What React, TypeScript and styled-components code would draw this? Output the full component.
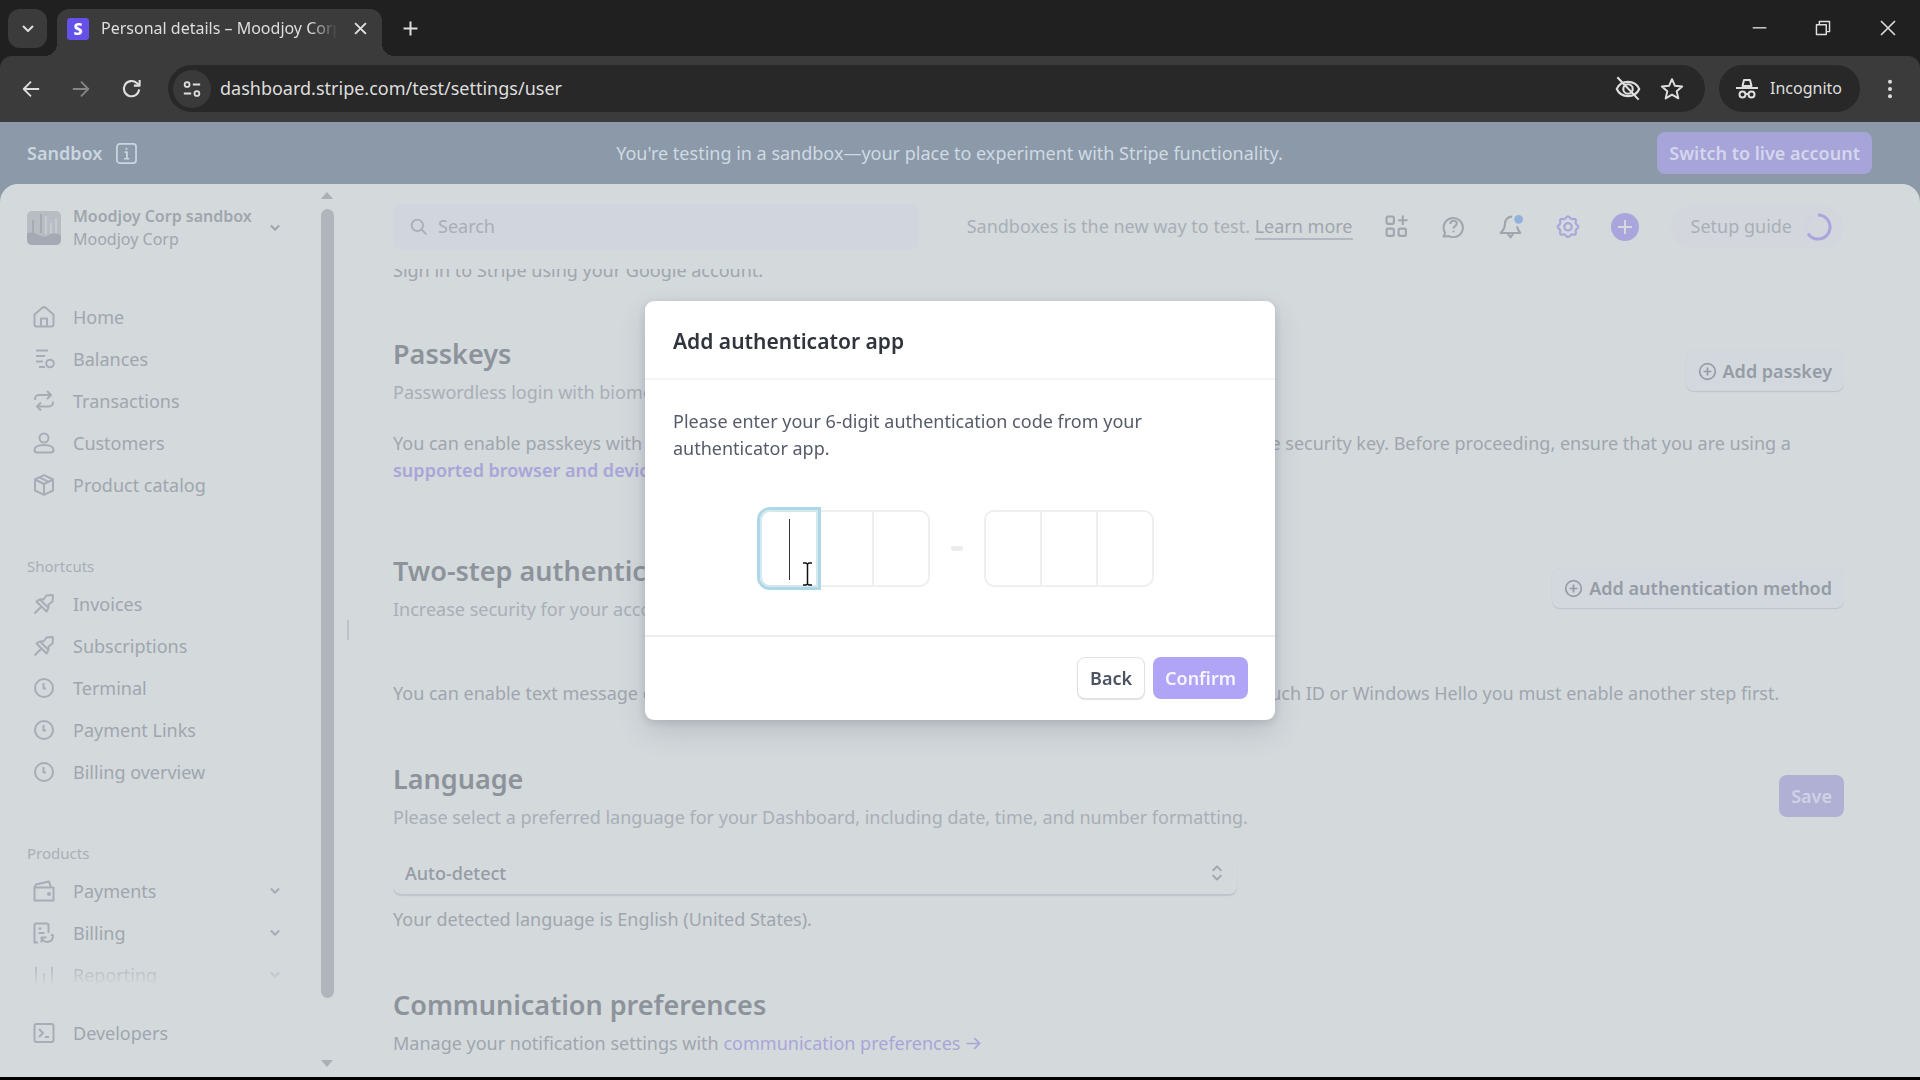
import React from "react";
import styled, { createGlobalStyle, css } from "styled-components";

const color = {
  strip: "#202020",
  toolbar: "#3b3b3b",
  field: "#282828",
  chromeText: "#dedede",
  banner: "#8b99a9",
  page: "#d4d9dc",
  text: "#9fa6ae",
  soft: "#a8afb7",
  icon: "#a6adb7",
  heading: "#8c939b",
  strong: "#959ca5",
  link: "#a9a5d8",
  accent: "#aaa5dc",
};

const Global = createGlobalStyle`
  *, *::before, *::after { box-sizing: border-box; }
  html, body, #root { height: 100%; }
  body {
    margin: 0;
    background: #000;
    font-family: "Noto Sans", "Open Sans", sans-serif;
    font-size: 18px;
    line-height: 27px;
    color: ${color.text};
    overflow: hidden;
  }
  button, input, select { font: inherit; color: inherit; margin: 0; }
  button { padding: 0; border: 0; background: none; }
  a { color: inherit; text-decoration: none; }
  h1, h2, p, ul { margin: 0; padding: 0; }
  ul { list-style: none; }
`;

const Screen = styled.div`
  display: flex;
  flex-direction: column;
  height: 100vh;
  padding-bottom: 3px;
`;

/* ---------- Browser window ---------- */

const TabStrip = styled.div`
  display: flex;
  flex: none;
  height: 56px;
  padding: 9px 0 0 8px;
  background: ${color.strip};
  color: ${color.chromeText};
`;

const TabSearch = styled.button`
  display: grid;
  place-items: center;
  width: 39px;
  height: 39px;
  margin-right: 10px;
  border-radius: 12px;
  background: ${color.toolbar};
`;

const Tab = styled.div`
  position: relative;
  display: flex;
  align-items: center;
  width: 325px;
  height: 47px;
  padding: 0 10px 8px 10px;
  border-radius: 12px 12px 0 0;
  background: ${color.toolbar};
  font-size: 16px;

  &::before, &::after {
    content: "";
    position: absolute;
    bottom: 0;
    width: 12px;
    height: 12px;
  }
  &::before {
    left: -12px;
    background: radial-gradient(circle at 0 0, transparent 12px, ${color.toolbar} 12px);
  }
  &::after {
    right: -12px;
    background: radial-gradient(circle at 100% 0, transparent 12px, ${color.toolbar} 12px);
  }
`;

const Favicon = styled.span`
  display: grid;
  place-items: center;
  width: 22px;
  height: 22px;
  margin-right: 12px;
  border-radius: 3px;
  background: #6351ea;
  color: #fff;
  font-weight: 800;
  font-size: 16px;
  line-height: 22px;
`;

const TabTitle = styled.span`
  flex: 1;
  margin-right: 10px;
  overflow: hidden;
  white-space: nowrap;
  mask-image: linear-gradient(90deg, #000 88%, transparent);
`;

const ChromeButton = styled.button<{ $width?: number; $dim?: boolean }>`
  display: grid;
  place-items: center;
  flex: none;
  width: ${(p) => p.$width ?? 40}px;
  height: 38px;
  color: ${(p) => (p.$dim ? "#858585" : color.chromeText)};
`;

const WindowControls = styled.div`
  display: flex;
  margin-left: auto;
`;

const Toolbar = styled.div`
  flex: none;
  background: ${color.strip};
`;

const ToolbarInner = styled.div`
  display: flex;
  align-items: center;
  height: 66px;
  padding: 0 10px 1px 6px;
  border-radius: 12px 12px 0 0;
  background: ${color.toolbar};
  color: ${color.chromeText};
`;

const Omnibox = styled.div`
  display: flex;
  flex: 1;
  align-items: center;
  height: 47px;
  margin-left: 12px;
  padding: 0 12px 0 5px;
  border-radius: 24px;
  background: ${color.field};
`;

const SiteInfo = styled.button`
  display: grid;
  place-items: center;
  width: 38px;
  height: 38px;
  margin-right: 9px;
  border-radius: 50%;
  background: #3a3a3a;
`;

const Address = styled.input`
  flex: 1;
  min-width: 0;
  padding: 0;
  border: 0;
  outline: 0;
  background: none;
  font-size: 18px;
`;

const Incognito = styled.div`
  display: flex;
  align-items: center;
  gap: 12px;
  height: 47px;
  margin: 0 10px 0 14px;
  padding: 0 18px 0 17px;
  border-radius: 24px;
  background: ${color.field};
  font-size: 16px;
`;

/* ---------- Sandbox banner ---------- */

const Banner = styled.div`
  display: grid;
  grid-template-columns: 1fr auto 1fr;
  align-items: center;
  flex: none;
  height: 62px;
  padding: 0 48px 0 27px;
  background: ${color.banner};
  color: #cbd6df;
`;

const BannerName = styled.div`
  display: flex;
  align-items: center;
  gap: 14px;
  font-weight: 600;
`;

const BannerText = styled.p`
  color: #d0dae3;
`;

const Button = styled.button<{ $tone: "live" | "save" | "confirm" | "back" | "ghost" }>`
  display: inline-flex;
  align-items: center;
  justify-content: center;
  gap: 6px;
  height: 42px;
  padding: 0 12px;
  border-radius: 8px;
  font-weight: 600;
  white-space: nowrap;
  ${(p) =>
    ({
      live: css`background: #a6a4d9; color: #d5d6ec; justify-self: end;`,
      save: css`background: #afb0d4; color: #cfd2e4;`,
      confirm: css`background: #b0a4f6; color: #f6f4ff;`,
      back: css`
        background: #fff;
        color: #4b5260;
        border: 1px solid #dfe1e5;
        box-shadow: 0 1px 1px rgba(0, 0, 0, 0.12);
      `,
      ghost: css`
        height: 40px;
        background: #d3d8de;
        color: ${color.strong};
        box-shadow: 0 1px 1px #bcc1ca, 0 0 1px #c8cdd4;
      `,
    })[p.$tone]}
`;

/* ---------- Dashboard shell ---------- */

const Shell = styled.div`
  flex: 1;
  min-height: 0;
  background: ${color.banner};
`;

const Page = styled.div`
  display: flex;
  height: 100%;
  border-radius: 18px 18px 0 0;
  background: ${color.page};
  overflow: hidden;
`;

const Sidebar = styled.nav`
  display: flex;
  flex-direction: column;
  flex: none;
  width: 320px;
  padding: 21px 38px 0 27px;
`;

const Account = styled.button`
  display: grid;
  grid-template-columns: 34px 1fr 16px;
  column-gap: 12px;
  align-items: center;
  margin-bottom: 45px;
  text-align: left;
  font-size: 16px;
  line-height: 23px;
`;

const Avatar = styled.svg`
  width: 34px;
  height: 34px;
  border-radius: 5px;
`;

const AccountName = styled.span`
  display: block;
  font-weight: 600;
  white-space: nowrap;
`;

const NavList = styled.ul<{ $gap?: number }>`
  display: flex;
  flex-direction: column;
  margin-bottom: ${(p) => p.$gap ?? 0}px;
`;

const NavLink = styled.a<{ $fading?: boolean }>`
  display: grid;
  grid-template-columns: 34px 1fr 16px;
  column-gap: 12px;
  align-items: center;
  justify-items: start;
  height: 42px;
  svg { color: ${color.icon}; }
  & > svg:first-child { margin-left: 6px; }
  ${(p) =>
    p.$fading &&
    css`
      mask-image: linear-gradient(rgba(0, 0, 0, 0.6) 35%, rgba(0, 0, 0, 0.3) 55%, transparent 76%);
    `}
`;

const NavLabel = styled.h2`
  margin-bottom: 4px;
  font-size: 15px;
  font-weight: 400;
  line-height: 26px;
  color: ${color.soft};
`;

const ScrollBar = styled.div`
  display: flex;
  flex-direction: column;
  align-items: center;
  flex: none;
  width: 14px;
  padding: 8px 0 10px;
`;

const ScrollArrow = styled.span<{ $down?: boolean }>`
  border: 6px solid transparent;
  border-top: ${(p) => (p.$down ? "7px solid #a9b0b6" : "0")};
  border-bottom: ${(p) => (p.$down ? "0" : "7px solid #a9b0b6")};
`;

const ScrollThumb = styled.div`
  flex: 788;
  width: 13px;
  margin: 10px 0 0;
  border-radius: 7px;
  background: #afb5ba;
`;

const ScrollSpace = styled.div`
  flex: 62;
`;

const Resizer = styled.div`
  align-self: center;
  flex: none;
  width: 2px;
  height: 20px;
  margin: 0 44px 2px 13px;
  background: #bcc2c8;
`;

const Main = styled.main`
  display: flex;
  flex-direction: column;
  flex: 1;
  min-width: 0;
  padding-right: 76px;
`;

const Header = styled.header`
  display: flex;
  align-items: center;
  flex: none;
  height: 85px;
`;

const SearchBox = styled.label`
  display: flex;
  align-items: center;
  gap: 10px;
  flex: 0 1 526px;
  height: 46px;
  padding-left: 17px;
  border-radius: 8px;
  background: #d1d5dd;
  color: ${color.soft};
`;

const SearchInput = styled.input`
  flex: 1;
  min-width: 0;
  padding: 0;
  border: 0;
  background: none;
  &::placeholder { color: ${color.soft}; opacity: 1; }
`;

const HeaderNote = styled.p`
  margin-left: auto;
  white-space: nowrap;
  color: ${color.soft};
  a { border-bottom: 2px solid #b2b8c1; color: ${color.text}; }
`;

const HeaderIcons = styled.div`
  display: flex;
  align-items: center;
  gap: 29px;
  margin: 0 32px 0 30px;
`;

const IconButton = styled.button<{ $accent?: boolean }>`
  display: grid;
  place-items: center;
  width: 28px;
  height: 28px;
  color: ${(p) => (p.$accent ? color.accent : color.text)};
`;

const SetupGuide = styled.button`
  display: flex;
  align-items: center;
  gap: 12px;
  height: 44px;
  padding: 0 12px 0 20px;
  border-radius: 22px;
  background: #d3d7dd;
  color: ${color.soft};
`;

const Content = styled.div`
  flex: 1;
  min-height: 0;
  overflow: hidden;
`;

const Clipped = styled.p`
  margin: -12px 0 52px;
`;

const Section = styled.section<{ $gap: number }>`
  margin-bottom: ${(p) => p.$gap}px;
`;

const SectionHead = styled.div<{ $gap: number }>`
  display: flex;
  align-items: center;
  justify-content: space-between;
  margin-bottom: ${(p) => p.$gap}px;
`;

const Heading = styled.h2`
  margin-bottom: 7px;
  font-size: 27px;
  font-weight: 600;
  line-height: 36px;
  color: ${color.heading};
`;

const Muted = styled.p`
  color: ${color.soft};
`;

const Link = styled.a<{ $bold?: boolean }>`
  color: ${color.link};
  font-weight: ${(p) => (p.$bold ? 600 : 400)};
  svg { vertical-align: -2px; }
`;

const SelectWrap = styled.label`
  display: grid;
  align-items: center;
  width: 58.2%;
  height: 42px;
  margin-bottom: 12px;
  border-radius: 8px;
  box-shadow: 0 2px 1px #bec4ca;
  & > * { grid-area: 1 / 1; }
  svg { justify-self: end; margin-right: 12px; }
`;

const Select = styled.select`
  appearance: none;
  width: 100%;
  height: 42px;
  padding: 0 12px;
  border: 0;
  border-radius: 8px;
  background: transparent;
  color: ${color.strong};
  font-weight: 500;
`;

/* ---------- Dialog ---------- */

const Overlay = styled.div`
  position: fixed;
  inset: 0;
  display: grid;
  place-items: center;
  padding-bottom: 59px;
`;

const Dialog = styled.div`
  display: flex;
  flex-direction: column;
  width: 630px;
  border-radius: 9px;
  background: #fff;
  color: #555b68;
  box-shadow: 0 12px 28px rgba(60, 70, 90, 0.16), 0 2px 8px rgba(60, 70, 90, 0.18);
`;

const DialogTitle = styled.h1`
  padding: 26px 28px 22px;
  border-bottom: 2px solid #f3f4f5;
  font-size: 21px;
  font-weight: 600;
  line-height: 29px;
  color: #30343c;
`;

const DialogBody = styled.div`
  padding: 28px 92px 48px 28px;
`;

const CodeRow = styled.div`
  display: flex;
  align-items: center;
  justify-content: center;
  margin: 48px -64px 0 0;
  padding-right: 6px;
`;

const CodeGroup = styled.div`
  display: flex;
`;

const CodeCell = styled.div<{ $active?: boolean }>`
  position: relative;
  width: 58px;
  height: 77px;
  border: 2px solid #efeff1;
  margin-right: -2px;
  &:first-child { border-radius: 10px 0 0 10px; }
  &:last-child { border-radius: 0 10px 10px 0; margin-right: 0; }
  ${(p) =>
    p.$active &&
    css`
      z-index: 1;
      border-color: #d4e8f0;
      box-shadow: 0 0 0 3px #aed8e7;
    `}
`;

const CodeInput = styled.input`
  width: 100%;
  height: 100%;
  padding: 0;
  border: 0;
  outline: 0;
  background: none;
  text-align: center;
  font-size: 40px;
`;

const Caret = styled.span`
  position: absolute;
  top: 7px;
  left: 27px;
  width: 1px;
  height: 61px;
  background: #333;
`;

const Pointer = styled.svg`
  position: absolute;
  left: 40px;
  top: 50px;
`;

const Dash = styled.span`
  width: 12px;
  height: 5px;
  margin: 0 21px;
  border-radius: 2px;
  background: #ececef;
`;

const DialogFooter = styled.div`
  display: flex;
  justify-content: flex-end;
  gap: 8px;
  padding: 20px 27px 21px;
  border-top: 2px solid #ededf0;
`;

/* ---------- Icons ---------- */

const shapes: Record<string, React.ReactNode> = {
  home: <><path d="M1.500 8.500 9 2a3 3 0 0 1 4 0l7.500 6.500V18.500a2 2 0 0 1-2 2h-15a2 2 0 0 1-2-2z" /><path d="M8 20.500v-8h6v8" /></>,
  balances: <><path d="M3 2.500h12M3 8h9M3 13.500h7M6 19h6" /><circle cx="17" cy="15.500" r="3.800" /></>,
  transactions: <><path d="M14 1l4 4-4 4" /><path d="M18 5H6a4 4 0 0 0-4 4v1" /><path d="M8 12.500l-4 4 4 4" /><path d="M4 16.500h12a4 4 0 0 0 4-4v-1" /></>,
  customers: <><circle cx="11" cy="6" r="4.500" /><path d="M1.500 18c0-3.500 4-5 9.500-5s9.500 1.500 9.500 5c0 1.500-1 2.500-2.500 2.500H4C2.500 20.500 1.500 19.500 1.500 18z" /></>,
  catalog: <><path d="M11 1.200 20 5.500v11L11 20.800 2 16.500v-11z" /><path d="M2 5.500 11 10l9-4.500M11 10v10.800M6.500 3.300l9 4.500" /></>,
  pin: <><path d="M13.500 2.500 19 2a1 1 0 0 1 1 1l-.5 5.500-4 3c.5 3-.2 5-2 7L3.500 8.500C5.500 6.800 7.500 6 10.500 6.500z" /><path d="M8 14 1.500 20.500M7 6.500l8.500 8.500" /></>,
  clock: <><circle cx="11" cy="11" r="9" /><path d="M10.500 6v5.500H13" /></>,
  payments: <><path d="M1.500 7.500h19v13h-19zM1.500 7.500 3 4.500 16 1.500l2 6" /><circle cx="16" cy="14" r="1" /></>,
  billing: <><path d="M5 20.500H1.500V3A1.500 1.500 0 0 1 3 1.500h11A1.500 1.500 0 0 1 15.500 3v8" /><path d="M5.500 6.500h3M5.500 11h6" /><path d="M8.500 20.500v-5h5M9 16c2 5.500 11 5.500 11-2.500l-2-1" /></>,
  reporting: <path d="M3 3v17M11 9v11M19 3v17" />,
  developers: <><rect x="1.500" y="2" width="19" height="18" rx="2" /><path d="m6 7 4 4-4 4M12 15h4" /></>,
  chevron: <path d="m6 8 5 5 5-5" />,
  search: <><circle cx="9" cy="9" r="7" /><path d="m14 14 6 6" /></>,
  apps: <><rect x="1.500" y="1.500" width="7" height="7" rx="1.500" /><rect x="1.500" y="13" width="7" height="7" rx="1.500" /><rect x="13" y="13" width="7" height="7" rx="1.500" /><path d="M17 .5v9M12.500 5h9" /></>,
  help: <><path d="M1.500 20.500 3 17a9.200 9.200 0 1 1 3.500 3.200z" /><path d="M8 8.500c0-4 6.200-3.800 6.200-.2C14.200 10.500 11 10.500 11 13M11 15v1.500" /></>,
  bell: <><path d="M12 1.500C8 1.500 5.500 4.500 5.500 8c0 4-1.500 6-4 8.500h18c-1.500-1.700-2.500-3.500-3-6" /><path d="M8 17l2.500 3.500L13 17" /><circle cx="18" cy="4" r="4" fill="#92b2dc" stroke="none" /></>,
  gear: <><path d="M11 1.300c1.300 0 2 2 3.200 2.400 1.200.4 2.900-.7 3.700.2.900.9-.2 2.500.2 3.700.4 1.100 2.400 1.900 2.400 3.200s-2 2-2.400 3.200c-.4 1.200.7 2.900-.2 3.700-.9.900-2.500-.2-3.700.2-1.100.4-1.900 2.400-3.200 2.400s-2-2-3.200-2.400c-1.200-.4-2.900.7-3.700-.2-.9-.9.200-2.500-.2-3.700C3.500 12.900 1.500 12.100 1.500 10.800s2-2 2.400-3.200c.4-1.200-.7-2.900.2-3.700.9-.9 2.500.2 3.700-.2C8.900 3.300 9.700 1.300 11 1.300z" /><circle cx="11" cy="10.800" r="3.400" /></>,
  plusCircle: <><circle cx="11" cy="11" r="9" /><path d="M11 6.500v9M6.500 11h9" /></>,
  upDown: <path d="m5 8 6-6 6 6M5 14l6 6 6-6" />,
  arrowRight: <path d="M2 11h17M12 4l7 7-7 7" />,
  info: <><rect x="1" y="1" width="20" height="20" rx="3" /><path d="M9 9.500h2.500V16M8.500 16.500h5.500M11 5v2" /></>,
  back: <path d="M20 11H3M11 3l-8 8 8 8" />,
  forward: <path d="M2 11h17M11 3l8 8-8 8" />,
  reload: <><path d="M19 12a8 8 0 1 1-2.500-6.700L19 7.700" /><path d="M19.500 2v6h-6" /></>,
  close: <path d="m4 4 14 14M18 4 4 18" />,
  plus: <path d="M11 2v18M2 11h18" />,
  minimise: <path d="M1 10h20" />,
  restore: <><path d="M2 6.500h13.500V20H2z" /><path d="M6 6V2h14v14h-4" /></>,
  tune: <><circle cx="5" cy="5.500" r="3" /><path d="M12 5.500h9M1 16.500h9" /><circle cx="17" cy="16.500" r="3" /></>,
  eyeOff: <><path d="M1.500 11C5 3 17 3 20.500 11 17 19 5 19 1.500 11z" /><circle cx="11" cy="11" r="4" /><path d="m2 1 18 19" /></>,
  star: <path d="m11 2 2.700 6.100 6.600.6-5 4.400 1.500 6.500-5.800-3.400-5.800 3.400 1.500-6.500-5-4.400 6.600-.6z" />,
  incognito: <><path d="M6.500 8 8 2h6l1.500 6z" /><path d="M0 10h22" /><circle cx="6.500" cy="16.500" r="3" /><circle cx="15.500" cy="16.500" r="3" /><path d="M9.500 16h3" /></>,
  more: <g fill="currentColor" stroke="none"><circle cx="11" cy="3" r="2.200" /><circle cx="11" cy="11" r="2.200" /><circle cx="11" cy="19" r="2.200" /></g>,
};

const Icon = ({ name, size = 22, weight = 2 }: { name: string; size?: number; weight?: number }) => (
  <svg
    width={size}
    height={size}
    viewBox="0 0 22 22"
    fill="none"
    stroke="currentColor"
    strokeWidth={weight}
    strokeLinejoin="round"
    aria-hidden="true"
  >
    {shapes[name]}
  </svg>
);

type Item = { icon: string; label: string; expandable?: boolean; fading?: boolean };

const mainItems: Item[] = [
  { icon: "home", label: "Home" },
  { icon: "balances", label: "Balances" },
  { icon: "transactions", label: "Transactions" },
  { icon: "customers", label: "Customers" },
  { icon: "catalog", label: "Product catalog" },
];

const shortcuts: Item[] = [
  { icon: "pin", label: "Invoices" },
  { icon: "pin", label: "Subscriptions" },
  { icon: "clock", label: "Terminal" },
  { icon: "clock", label: "Payment Links" },
  { icon: "clock", label: "Billing overview" },
];

const products: Item[] = [
  { icon: "payments", label: "Payments", expandable: true },
  { icon: "billing", label: "Billing", expandable: true },
  { icon: "reporting", label: "Reporting", expandable: true, fading: true },
];

const Nav = ({ items, gap }: { items: Item[]; gap?: number }) => (
  <NavList $gap={gap}>
    {items.map((item) => (
      <li key={item.label}>
        <NavLink href="#" $fading={item.fading}>
          <Icon name={item.icon} />
          <span>{item.label}</span>
          {item.expandable && <Icon name="chevron" size={18} weight={2.6} />}
        </NavLink>
      </li>
    ))}
  </NavList>
);

const BrowserChrome = () => (
  <>
    <TabStrip>
      <TabSearch aria-label="Search tabs"><Icon name="chevron" size={22} /></TabSearch>
      <Tab>
        <Favicon>S</Favicon>
        <TabTitle>Personal details – Moodjoy Corp</TabTitle>
        <ChromeButton $width={24} aria-label="Close tab"><Icon name="close" size={17} weight={2.6} /></ChromeButton>
      </Tab>
      <ChromeButton $width={56} aria-label="New tab"><Icon name="plus" size={17} weight={2.6} /></ChromeButton>
      <WindowControls>
        <ChromeButton $width={64} aria-label="Minimise"><Icon name="minimise" size={15} /></ChromeButton>
        <ChromeButton $width={64} aria-label="Restore"><Icon name="restore" size={16} /></ChromeButton>
        <ChromeButton $width={65} aria-label="Close"><Icon name="close" size={22} weight={1.6} /></ChromeButton>
      </WindowControls>
    </TabStrip>
    <Toolbar>
      <ToolbarInner>
        <ChromeButton $width={50} aria-label="Back"><Icon name="back" size={20} /></ChromeButton>
        <ChromeButton $width={50} $dim aria-label="Forward"><Icon name="forward" size={20} /></ChromeButton>
        <ChromeButton $width={50} aria-label="Reload"><Icon name="reload" size={21} weight={2.2} /></ChromeButton>
        <Omnibox>
          <SiteInfo aria-label="Site information"><Icon name="tune" size={18} weight={2.2} /></SiteInfo>
          <Address aria-label="Address" defaultValue="dashboard.stripe.com/test/settings/user" />
          <ChromeButton $width={46} aria-label="Cookies blocked"><Icon name="eyeOff" size={26} weight={1.8} /></ChromeButton>
          <ChromeButton $width={42} aria-label="Bookmark"><Icon name="star" size={24} weight={1.8} /></ChromeButton>
        </Omnibox>
        <Incognito><Icon name="incognito" />Incognito</Incognito>
        <ChromeButton aria-label="Menu"><Icon name="more" size={20} /></ChromeButton>
      </ToolbarInner>
    </Toolbar>
  </>
);

const SideNav = () => (
  <Sidebar>
    <Account>
      <Avatar viewBox="0 0 34 34" aria-hidden="true">
        <rect width="34" height="34" fill="#b8bdc4" />
        <path d="M0 22c8-3 14 6 20 3s8-3 14-1v10H0z" fill="#a4a9b3" />
        <path d="M14 3v19M6 9v15" stroke="#a6abb3" strokeWidth="2" />
        <path d="M19 5v18M24 12v10M29 8v14" stroke="#c6cbcf" strokeWidth="2" />
      </Avatar>
      <span>
        <AccountName>Moodjoy Corp sandbox</AccountName>
        Moodjoy Corp
      </span>
      <Icon name="chevron" size={18} weight={2.6} />
    </Account>
    <Nav items={mainItems} gap={47} />
    <NavLabel>Shortcuts</NavLabel>
    <Nav items={shortcuts} gap={47} />
    <NavLabel>Products</NavLabel>
    <Nav items={products} gap={16} />
    <Nav items={[{ icon: "developers", label: "Developers" }]} />
  </Sidebar>
);

const TopBar = () => (
  <Header>
    <SearchBox>
      <Icon name="search" size={18} weight={2.2} />
      <SearchInput placeholder="Search" aria-label="Search" />
    </SearchBox>
    <HeaderNote>Sandboxes is the new way to test. <a href="#">Learn more</a></HeaderNote>
    <HeaderIcons>
      <IconButton aria-label="Apps"><Icon name="apps" size={23} /></IconButton>
      <IconButton aria-label="Help"><Icon name="help" size={23} /></IconButton>
      <IconButton aria-label="Notifications"><Icon name="bell" size={24} /></IconButton>
      <IconButton $accent aria-label="Settings"><Icon name="gear" size={24} /></IconButton>
      <IconButton $accent aria-label="Create">
        <svg width="28" height="28" viewBox="0 0 28 28" aria-hidden="true">
          <circle cx="14" cy="14" r="14" fill="currentColor" />
          <path d="M14 7v14M7 14h14" stroke={color.page} strokeWidth="2" />
        </svg>
      </IconButton>
    </HeaderIcons>
    <SetupGuide>
      Setup guide
      <svg width="28" height="28" viewBox="0 0 28 28" fill="none" aria-hidden="true">
        <circle cx="14" cy="14" r="12" stroke="#d0d4df" strokeWidth="3" />
        <path d="M14 2a12 12 0 1 1-10 18.600" stroke={color.accent} strokeWidth="3" />
      </svg>
    </SetupGuide>
  </Header>
);

const Settings = () => (
  <Content>
    <Clipped>Sign in to Stripe using your Google account.</Clipped>

    <Section $gap={69}>
      <SectionHead $gap={24}>
        <div>
          <Heading>Passkeys</Heading>
          <Muted>Passwordless login with biometrics or security keys.</Muted>
        </div>
        <Button $tone="ghost"><Icon name="plusCircle" size={19} />Add passkey</Button>
      </SectionHead>
      <p>
        You can enable passkeys with your device using Touch ID, Face ID, Windows Hello, or through a hardware
        security key. Before proceeding, ensure that you are using a{" "}
        <Link $bold href="#">supported browser and device.</Link>
      </p>
    </Section>

    <Section $gap={54}>
      <SectionHead $gap={57}>
        <div>
          <Heading>Two-step authentication</Heading>
          <Muted>Increase security for your account by using multiple authentication methods.</Muted>
        </div>
        <Button $tone="ghost"><Icon name="plusCircle" size={19} />Add authentication method</Button>
      </SectionHead>
      <p>
        You can enable text message or an authenticator app verification as your second step. To sign in with
        Touch ID or Windows Hello you must enable another step first.
      </p>
    </Section>

    <Section $gap={54}>
      <SectionHead $gap={21}>
        <div>
          <Heading>Language</Heading>
          <Muted>Please select a preferred language for your Dashboard, including date, time, and number formatting.</Muted>
        </div>
        <Button $tone="save">Save</Button>
      </SectionHead>
      <SelectWrap>
        <Select aria-label="Language" defaultValue="auto">
          <option value="auto">Auto-detect</option>
        </Select>
        <Icon name="upDown" size={16} weight={2.6} />
      </SelectWrap>
      <p>Your detected language is English (United States).</p>
    </Section>

    <Section $gap={0}>
      <Heading>Communication preferences</Heading>
      <p>
        Manage your notification settings with{" "}
        <Link href="#">communication preferences <Icon name="arrowRight" size={17} weight={2.2} /></Link>
      </p>
    </Section>
  </Content>
);

const CodeDialog = () => (
  <Overlay>
    <Dialog role="dialog" aria-modal="true" aria-labelledby="dialog-title">
      <DialogTitle id="dialog-title">Add authenticator app</DialogTitle>
      <DialogBody>
        <p>Please enter your 6-digit authentication code from your authenticator app.</p>
        <CodeRow>
          <CodeGroup>
            {[1, 2, 3].map((n) => (
              <CodeCell key={n} $active={n === 1}>
                <CodeInput aria-label={`Digit ${n}`} maxLength={1} />
                {n === 1 && (
                  <>
                    <Caret />
                    <Pointer width="11" height="24" viewBox="0 0 11 24" fill="none" stroke="#111" strokeWidth="1.5" aria-hidden="true">
                      <path d="M1 1h3l1.500 1L7 1h3M1 23h3l1.500-1L7 23h3M5.500 2v20" />
                    </Pointer>
                  </>
                )}
              </CodeCell>
            ))}
          </CodeGroup>
          <Dash />
          <CodeGroup>
            {[4, 5, 6].map((n) => (
              <CodeCell key={n}><CodeInput aria-label={`Digit ${n}`} maxLength={1} /></CodeCell>
            ))}
          </CodeGroup>
        </CodeRow>
      </DialogBody>
      <DialogFooter>
        <Button $tone="back">Back</Button>
        <Button $tone="confirm">Confirm</Button>
      </DialogFooter>
    </Dialog>
  </Overlay>
);

export default function App() {
  return (
    <Screen>
      <Global />
      <BrowserChrome />
      <Banner>
        <BannerName>Sandbox <Icon name="info" size={21} weight={1.8} /></BannerName>
        <BannerText>You're testing in a sandbox—your place to experiment with Stripe functionality.</BannerText>
        <Button $tone="live">Switch to live account</Button>
      </Banner>
      <Shell>
        <Page>
          <SideNav />
          <ScrollBar>
            <ScrollArrow />
            <ScrollThumb />
            <ScrollSpace />
            <ScrollArrow $down />
          </ScrollBar>
          <Resizer />
          <Main>
            <TopBar />
            <Settings />
          </Main>
        </Page>
      </Shell>
      <CodeDialog />
    </Screen>
  );
}
